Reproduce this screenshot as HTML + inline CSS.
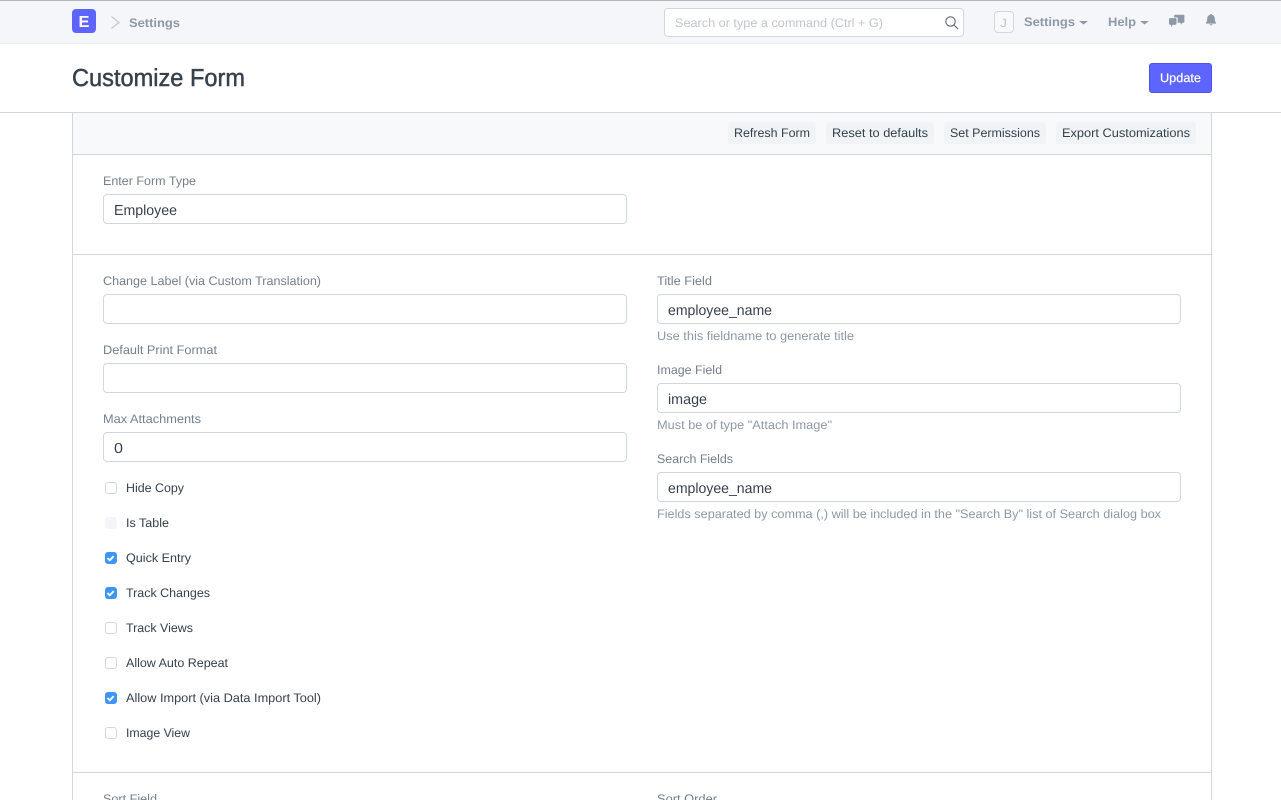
<!DOCTYPE html>
<html lang="en">
<head>
<meta charset="utf-8">
<title>Customize Form</title>
<style>
html,body{margin:0;padding:0;background:#fff;overflow:hidden}
body{width:1281px;height:800px;position:relative;font-family:"Liberation Sans",sans-serif}
.b{position:absolute;box-sizing:border-box}
.in{background:#fff;border:1px solid #d1d8dd;border-radius:4px;height:30px;width:524px}
.btn{background:#f0f4f7;border-radius:3px;height:22px;top:122px}
.cb{width:12px;height:12px;left:105px;border:1px solid #d1d8dd;border-radius:3px;background:#fff}
.cb.off{background:#f4f5f8;border-color:#f4f5f8}
.cb.on{background:#3d95f5;border-color:#3d95f5}
svg.t{position:absolute;left:0;top:0}
text{font-family:"Liberation Sans",sans-serif;text-rendering:geometricPrecision}
.lab{font-size:12.4px;fill:#74808b}
.val{font-size:14.500px;fill:#36414c}
.chk{font-size:12.4px;fill:#36414c}
.hlp{font-size:12.4px;fill:#8d99a6}
.nav{font-size:12.4px;font-weight:bold;fill:#8d99a6}
.tb{font-size:12.4px;fill:#36414c}
</style>
</head>
<body>
<!-- navbar -->
<div class="b" style="left:0;top:0;width:1281px;height:44px;background:#f5f6fa;border-top:1px solid #b4b4b6;border-bottom:1px solid #ebeff2"></div>
<div class="b" style="left:72px;top:9px;width:24px;height:24px;background:#5e64ff;border-radius:4px"></div>
<div class="b" style="left:664px;top:8px;width:300px;height:29px;background:#fff;border:1px solid #d1d8dd;border-radius:4px"></div>
<div class="b" style="left:994px;top:11px;width:20px;height:22px;background:#f8f9fb;border:1px solid #d1d8dd;border-radius:4px"></div>
<!-- page head -->
<div class="b" style="left:0;top:112px;width:1281px;height:1px;background:#d1d8dd"></div>
<div class="b" style="left:1149px;top:63px;width:63px;height:30px;background:#5e64ff;border:1px solid #4d53e8;border-radius:3px"></div>
<!-- form -->
<div class="b" style="left:72px;top:113px;width:1140px;height:687px;border-left:1px solid #d1d8dd;border-right:1px solid #d1d8dd"></div>
<div class="b" style="left:73px;top:113px;width:1138px;height:42px;background:#f8f9fb;border-bottom:1px solid #d1d8dd"></div>
<div class="b btn" style="left:728px;width:88px"></div>
<div class="b btn" style="left:826px;width:108px"></div>
<div class="b btn" style="left:944px;width:102px"></div>
<div class="b btn" style="left:1056px;width:140px"></div>
<div class="b" style="left:73px;top:254px;width:1138px;height:1px;background:#d1d8dd"></div>
<div class="b" style="left:73px;top:772px;width:1138px;height:1px;background:#d1d8dd"></div>
<!-- inputs -->
<div class="b in" style="left:103px;top:194px"></div>
<div class="b in" style="left:103px;top:294px"></div>
<div class="b in" style="left:103px;top:363px"></div>
<div class="b in" style="left:103px;top:432px"></div>
<div class="b in" style="left:657px;top:294px"></div>
<div class="b in" style="left:657px;top:383px"></div>
<div class="b in" style="left:657px;top:472px"></div>
<!-- checkboxes -->
<div class="b cb" style="top:482px"></div>
<div class="b cb off" style="top:517px"></div>
<div class="b cb on" style="top:552px"></div>
<div class="b cb on" style="top:587px"></div>
<div class="b cb" style="top:622px"></div>
<div class="b cb" style="top:657px"></div>
<div class="b cb on" style="top:692px"></div>
<div class="b cb" style="top:727px"></div>

<svg class="t" width="1281" height="800" viewBox="0 0 1281 800">
<!-- logo -->
<text x="78.5" y="27" font-size="16" font-weight="bold" fill="#fff" textLength="11" lengthAdjust="spacingAndGlyphs">E</text>
<path d="M111.500 16.500l7.500 6-7.500 6" fill="none" stroke="#c4cad0" stroke-width="1.300"/>
<text x="129" y="27" class="nav" textLength="51" lengthAdjust="spacingAndGlyphs">Settings</text>
<text x="675" y="27" font-size="12.4" fill="#c0c6cc" textLength="208" lengthAdjust="spacingAndGlyphs">Search or type a command (Ctrl + G)</text>
<circle cx="950.500" cy="21.500" r="4.700" fill="none" stroke="#5f6b75" stroke-width="1.100"/>
<path d="M954 25l4 4" stroke="#5f6b75" stroke-width="1.200" fill="none"/>
<text x="1000" y="27" font-size="12" fill="#c0c6cc" textLength="7" lengthAdjust="spacingAndGlyphs">J</text>
<text x="1024" y="26" class="nav" textLength="51" lengthAdjust="spacingAndGlyphs">Settings</text>
<path d="M1079 21h9l-4.500 3.500z" fill="#8d99a6"/>
<text x="1108" y="26" class="nav" textLength="28" lengthAdjust="spacingAndGlyphs">Help</text>
<path d="M1140 21h9l-4.500 3.500z" fill="#8d99a6"/>
<!-- chat bubbles -->
<path d="M1175 14.800h8.500a.9.900 0 0 1 .9.900v6.200a.9.900 0 0 1-.9.900h-1l-1.800 1.900v-1.900h-3v-5.300h-3.600v-1.800a.9.900 0 0 1 .9-.9z" fill="#8d99a6"/>
<path d="M1169.900 18.100h5.700a.9.900 0 0 1 .9.900v4.800a.9.900 0 0 1-.9.900h-2.900l-1.700 2.300v-2.300h-1.100a.9.900 0 0 1-.9-.9v-4.800a.9.900 0 0 1 .9-.9z" fill="#8d99a6"/>
<!-- bell -->
<path d="M1211 14c.6 0 1 .4 1 .9 1.900.5 2.800 2 2.800 3.900 0 1.900.4 3 1.200 4v.8h-10v-.8c.8-1 1.200-2.100 1.200-4 0-1.900.9-3.400 2.800-3.900 0-.5.4-.9 1-.9zM1209.500 24.300h3c0 .7-.6 1.100-1.500 1.100s-1.500-.4-1.500-1.100z" fill="#8d99a6"/>

<!-- title / update -->
<text x="72" y="86" font-size="24.500" fill="#36414c" stroke="#36414c" stroke-width=".45" textLength="173" lengthAdjust="spacingAndGlyphs">Customize Form</text>
<text x="1160" y="82" font-size="12.4" fill="#fff" stroke="#fff" stroke-width=".2" textLength="41" lengthAdjust="spacingAndGlyphs">Update</text>

<!-- toolbar -->
<text x="734" y="137" class="tb" textLength="76" lengthAdjust="spacingAndGlyphs">Refresh Form</text>
<text x="832" y="137" class="tb" textLength="96" lengthAdjust="spacingAndGlyphs">Reset to defaults</text>
<text x="950" y="137" class="tb" textLength="90" lengthAdjust="spacingAndGlyphs">Set Permissions</text>
<text x="1062" y="137" class="tb" textLength="128" lengthAdjust="spacingAndGlyphs">Export Customizations</text>

<!-- left col -->
<text x="103" y="185" class="lab" textLength="93" lengthAdjust="spacingAndGlyphs">Enter Form Type</text>
<text x="114" y="215" class="val" textLength="63" lengthAdjust="spacingAndGlyphs">Employee</text>
<text x="103" y="285" class="lab" textLength="218" lengthAdjust="spacingAndGlyphs">Change Label (via Custom Translation)</text>
<text x="103" y="354" class="lab" textLength="114" lengthAdjust="spacingAndGlyphs">Default Print Format</text>
<text x="103" y="423" class="lab" textLength="98" lengthAdjust="spacingAndGlyphs">Max Attachments</text>
<text x="114" y="453" class="val" textLength="9" lengthAdjust="spacingAndGlyphs">0</text>

<text x="126" y="492" class="chk" textLength="58" lengthAdjust="spacingAndGlyphs">Hide Copy</text>
<text x="126" y="527" class="chk" textLength="43" lengthAdjust="spacingAndGlyphs">Is Table</text>
<text x="126" y="562" class="chk" textLength="65" lengthAdjust="spacingAndGlyphs">Quick Entry</text>
<text x="126" y="597" class="chk" textLength="84" lengthAdjust="spacingAndGlyphs">Track Changes</text>
<text x="126" y="632" class="chk" textLength="67" lengthAdjust="spacingAndGlyphs">Track Views</text>
<text x="126" y="667" class="chk" textLength="102" lengthAdjust="spacingAndGlyphs">Allow Auto Repeat</text>
<text x="126" y="702" class="chk" textLength="195" lengthAdjust="spacingAndGlyphs">Allow Import (via Data Import Tool)</text>
<text x="126" y="737" class="chk" textLength="64" lengthAdjust="spacingAndGlyphs">Image View</text>

<path d="M107.400 558l2.400 2.300 3.900-4.200M107.400 593l2.400 2.300 3.900-4.200M107.400 698l2.400 2.300 3.900-4.200" fill="none" stroke="#fff" stroke-width="1.900"/>

<!-- right col -->
<text x="657" y="285" class="lab" textLength="55" lengthAdjust="spacingAndGlyphs">Title Field</text>
<text x="668" y="315" class="val" textLength="104" lengthAdjust="spacingAndGlyphs">employee_name</text>
<text x="657" y="340" class="hlp" textLength="197" lengthAdjust="spacingAndGlyphs">Use this fieldname to generate title</text>
<text x="657" y="374" class="lab" textLength="65" lengthAdjust="spacingAndGlyphs">Image Field</text>
<text x="668" y="404" class="val" textLength="39" lengthAdjust="spacingAndGlyphs">image</text>
<text x="657" y="429" class="hlp" textLength="175" lengthAdjust="spacingAndGlyphs">Must be of type "Attach Image"</text>
<text x="657" y="463" class="lab" textLength="76" lengthAdjust="spacingAndGlyphs">Search Fields</text>
<text x="668" y="493" class="val" textLength="104" lengthAdjust="spacingAndGlyphs">employee_name</text>
<text x="657" y="518" class="hlp" textLength="504" lengthAdjust="spacingAndGlyphs">Fields separated by comma (,) will be included in the "Search By" list of Search dialog box</text>

<!-- bottom -->
<text x="103" y="803" class="lab" textLength="54" lengthAdjust="spacingAndGlyphs">Sort Field</text>
<text x="657" y="803" class="lab" textLength="60" lengthAdjust="spacingAndGlyphs">Sort Order</text>
</svg>
</body>
</html>
